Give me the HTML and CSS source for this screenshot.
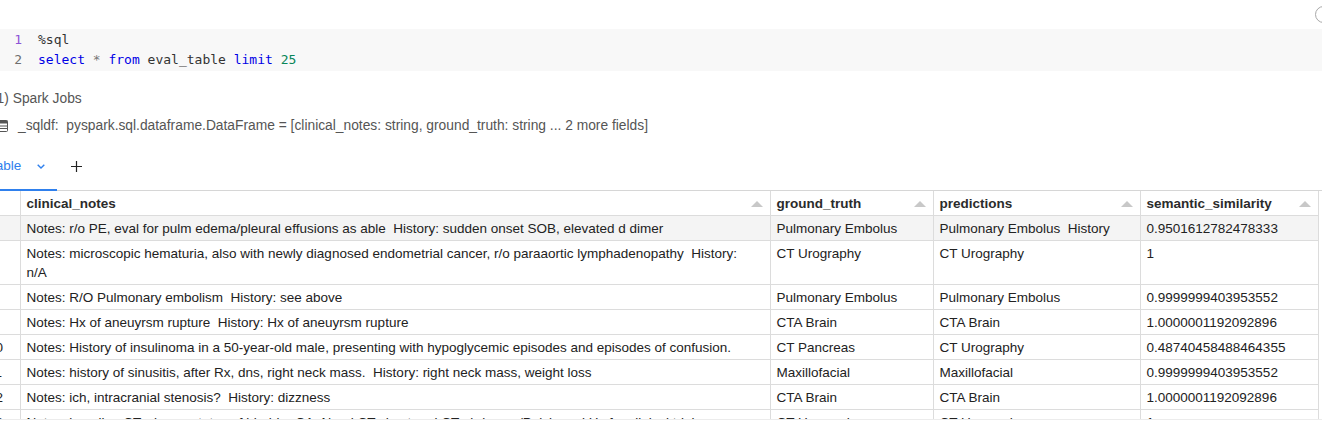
FILE: index.html
```html
<!DOCTYPE html>
<html>
<head>
<meta charset="utf-8">
<link rel="stylesheet" href="styles.css">
</head>
<body>
<div class="topbar"><span class="circle"></span></div>
<div class="editor">
  <div class="line"><span class="ln active">1</span><span class="code"><span class="tx">%sql</span></span></div>
  <div class="line"><span class="ln">2</span><span class="code"><span class="kw">select</span> <span class="op">*</span> <span class="kw">from</span> <span class="tx">eval_table</span> <span class="kw">limit</span> <span class="num">25</span></span></div>
</div>
<div class="output">
  <div class="jobs">(1) Spark Jobs</div>
  <div class="df">
    <svg class="dficon" width="14" height="12" viewBox="0 0 14 12"><rect x="0.5" y="0.5" width="13" height="11" rx="1" fill="none" stroke="#555" stroke-width="1"/><rect x="0.5" y="0.5" width="13" height="3" fill="#555"/><line x1="1" y1="6" x2="13" y2="6" stroke="#555"/><line x1="1" y1="8.5" x2="13" y2="8.5" stroke="#555"/></svg>
    <span>_sqldf:&nbsp; pyspark.sql.dataframe.DataFrame = [clinical_notes: string, ground_truth: string ... 2 more fields]</span>
  </div>
  <div class="tabs">
    <div class="tab">Table
      <svg class="chev" width="8" height="5" viewBox="0 0 8 5"><path d="M0.7 0.7 L4 4 L7.3 0.7" fill="none" stroke="#2f80ed" stroke-width="1.4"/></svg>
    </div>
    <svg class="plus" width="11" height="11" viewBox="0 0 11 11"><path d="M5.5 0 V11 M0 5.5 H11" stroke="#222" stroke-width="1.2"/></svg>
  </div>
  <div class="tablewrap">
    <table class="grid">
      <colgroup>
        <col class="c0"><col class="c1"><col class="c2"><col class="c3"><col class="c4">
      </colgroup>
      <thead>
        <tr>
          <th class="rn"></th>
          <th><div class="hd"><span>clinical_notes</span><span class="sort"></span></div></th>
          <th><div class="hd"><span>ground_truth</span><span class="sort"></span></div></th>
          <th><div class="hd"><span>predictions</span><span class="sort"></span></div></th>
          <th><div class="hd"><span>semantic_similarity</span><span class="sort"></span></div></th>
        </tr>
      </thead>
      <tbody>
        <tr class="hover"><td class="rn">6</td><td>Notes: r/o PE, eval for pulm edema/pleural effusions as able&nbsp; History: sudden onset SOB, elevated d dimer</td><td>Pulmonary Embolus</td><td>Pulmonary Embolus&nbsp; History</td><td>0.9501612782478333</td></tr>
        <tr><td class="rn">7</td><td>Notes: microscopic hematuria, also with newly diagnosed endometrial cancer, r/o paraaortic lymphadenopathy&nbsp; History: n/A</td><td>CT Urography</td><td>CT Urography</td><td>1</td></tr>
        <tr><td class="rn">8</td><td>Notes: R/O Pulmonary embolism&nbsp; History: see above</td><td>Pulmonary Embolus</td><td>Pulmonary Embolus</td><td>0.9999999403953552</td></tr>
        <tr><td class="rn">9</td><td>Notes: Hx of aneuyrsm rupture&nbsp; History: Hx of aneuyrsm rupture</td><td>CTA Brain</td><td>CTA Brain</td><td>1.0000001192092896</td></tr>
        <tr><td class="rn">10</td><td>Notes: History of insulinoma in a 50-year-old male, presenting with hypoglycemic episodes and episodes of confusion.</td><td>CT Pancreas</td><td>CT Urography</td><td>0.48740458488464355</td></tr>
        <tr><td class="rn">11</td><td>Notes: history of sinusitis, after Rx, dns, right neck mass.&nbsp; History: right neck mass, weight loss</td><td>Maxillofacial</td><td>Maxillofacial</td><td>0.9999999403953552</td></tr>
        <tr><td class="rn">12</td><td>Notes: ich, intracranial stenosis?&nbsp; History: dizzness</td><td>CTA Brain</td><td>CTA Brain</td><td>1.0000001192092896</td></tr>
        <tr><td class="rn">13</td><td>Notes: baseline CT, chemo status of bladder CA. Need CT chest and CT abdomen/Pelvis and Hx for clinical trial</td><td>CT Urography</td><td>CT Urography</td><td>1</td></tr>
      </tbody>
    </table>
  </div>
  <div class="bottomline"></div>
</div>
</body>
</html>
```

FILE: styles.css
```css
html, body {
  margin: 0;
  padding: 0;
  background: #fff;
  overflow: hidden;
  width: 1322px;
  height: 425px;
}
body {
  font-family: "Liberation Sans", Arial, Helvetica, sans-serif;
  font-size: 13px;
  color: #222;
}
.topbar {
  height: 29px;
  display: flex;
  justify-content: flex-end;
  align-items: flex-start;
}
.circle {
  width: 15px;
  height: 15px;
  border: 1.5px solid #a8a8a8;
  border-radius: 50%;
  margin-top: 6px;
  margin-right: -10px;
}
.editor {
  background: #f8f8f8;
  padding: 1px 0 1px 0;
  font-family: "DejaVu Sans Mono", "Liberation Mono", monospace;
  font-size: 13px;
}
.line {
  height: 20px;
  line-height: 20px;
  display: flex;
}
.ln {
  width: 22px;
  text-align: right;
  color: #6e6e6e;
  padding-right: 16px;
}
.ln.active { color: #8c54d6; }
.tx { color: #333; }
.kw { color: #0000e6; }
.op { color: #777; }
.num { color: #098658; }
.output {
  margin-left: -24px;
  width: 1346px;
}
.jobs {
  margin-top: 19px;
  height: 18px;
  line-height: 18px;
  padding-left: 16px;
  color: #555;
  font-size: 13.8px;
}
.df {
  margin-top: 9px;
  height: 18px;
  line-height: 18px;
  padding-left: 18px;
  display: flex;
  align-items: center;
  gap: 10px;
  color: #555;
  font-size: 13.8px;
}
.dficon { flex: none; }
.tabs {
  margin-top: 13px;
  height: 42px;
  display: flex;
  align-items: stretch;
  border-bottom: 1px solid #d6d6d6;
}
.tab {
  display: flex;
  align-items: center;
  padding: 0 12px 6px 13px;
  gap: 16px;
  color: #2f80ed;
  font-size: 13.5px;
  border-bottom: 2px solid #2f80ed;
  margin-bottom: -1px;
}
.chev { margin-top: 1px; }
.plus {
  align-self: center;
  margin-left: 14px;
  margin-bottom: 6px;
}
.tablewrap {
  height: 228px;
  overflow: hidden;
}
.grid {
  border-collapse: collapse;
  table-layout: fixed;
  width: 1342px;
  font-size: 13.5px;
}
.c0 { width: 44px; }
.c1 { width: 750px; }
.c2 { width: 163px; }
.c3 { width: 207px; }
.c4 { width: 178px; }
.grid th, .grid td {
  border-right: 1px solid #dcdcdc;
  border-bottom: 1px solid #dcdcdc;
  padding: 3px 6px 2px 6px;
  line-height: 19px;
  text-align: left;
  vertical-align: top;
  color: #222;
}
.grid td {
  padding-right: 14px;
}
.grid th {
  font-weight: bold;
  color: #2b2b2b;
}
.grid .rn {
  padding-left: 12px;
  padding-right: 0;
  white-space: nowrap;
  overflow: hidden;
}
.hd {
  display: flex;
  align-items: center;
  justify-content: space-between;
}
.sort {
  width: 0;
  height: 0;
  border-left: 6px solid transparent;
  border-right: 6px solid transparent;
  border-bottom: 6px solid #c8c8c8;
  margin-right: 1px;
}
.hover td { background: #f4f4f4; }
.bottomline {
  height: 1px;
  background: #ececec;
}
```
